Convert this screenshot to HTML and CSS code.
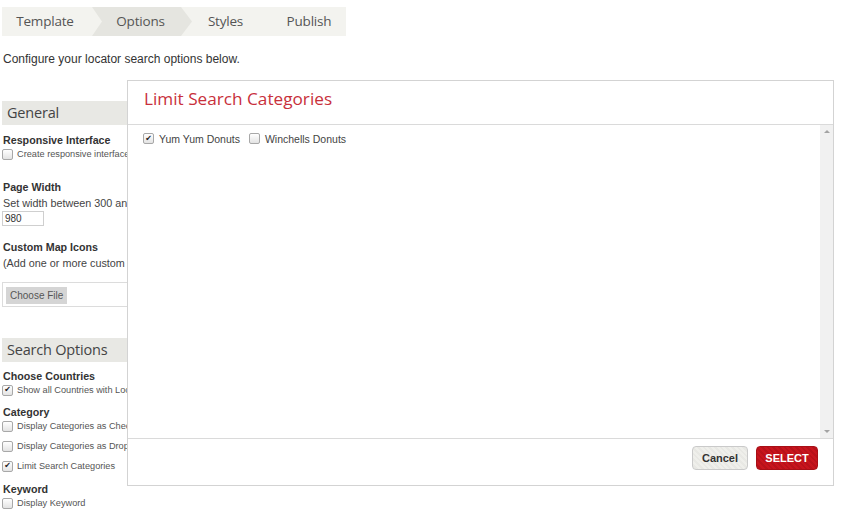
FILE: index.html
```html
<!DOCTYPE html>
<html lang="en">
<head>
    <meta charset="UTF-8">
    <meta name="viewport" content="width=device-width, initial-scale=1.0">
    <title>Locator Options</title>
    <link rel="stylesheet" href="styles.css">
</head>
<body>
    <div class="steps">
        <div class="step step-template">Template</div>
        <div class="step step-options">Options</div>
        <div class="step step-styles">Styles</div>
        <div class="step step-publish">Publish</div>
    </div>

    <p class="intro">Configure your locator search options below.</p>

    <div class="settings">
        <h2 class="section-title">General</h2>

        <div class="field field-first">
            <div class="field-label">Responsive Interface</div>
            <div class="check-row"><span class="cb"></span>Create responsive interface for mobile devices</div>
        </div>

        <div class="field field-page-width">
            <div class="field-label">Page Width</div>
            <div class="field-text">Set width between 300 and 2000 pixels</div>
            <div class="num-input">980</div>
        </div>

        <div class="field field-icons">
            <div class="field-label">Custom Map Icons</div>
            <div class="field-text">(Add one or more custom icons to your map)</div>
            <div class="file-box"><span class="file-button">Choose File</span></div>
        </div>

        <h2 class="section-title section-search">Search Options</h2>

        <div class="field field-first">
            <div class="field-label">Choose Countries</div>
            <div class="check-row"><span class="cb checked">&#10004;</span>Show all Countries with Locations</div>
        </div>

        <div class="field field-category">
            <div class="field-label">Category</div>
            <div class="check-row"><span class="cb"></span>Display Categories as Checkboxes</div>
            <div class="check-row spaced"><span class="cb"></span>Display Categories as Dropdown</div>
            <div class="check-row spaced"><span class="cb checked">&#10004;</span>Limit Search Categories</div>
        </div>

        <div class="field field-keyword">
            <div class="field-label">Keyword</div>
            <div class="check-row"><span class="cb"></span>Display Keyword</div>
        </div>
    </div>

    <!-- category picker dialog -->
    <div class="modal">
        <div class="modal-head">Limit Search Categories</div>
        <div class="modal-body">
            <div class="modal-content">
                <label class="cat-option"><span class="cb checked">&#10004;</span>Yum Yum Donuts</label>
                <label class="cat-option"><span class="cb"></span>Winchells Donuts</label>
            </div>
            <div class="scrollbar">
                <span class="arrow arrow-up"></span>
                <span class="arrow arrow-down"></span>
            </div>
        </div>
        <div class="modal-foot">
            <button class="btn btn-cancel">Cancel</button>
            <button class="btn btn-select">SELECT</button>
        </div>
    </div>
</body>
</html>
```

FILE: styles.css
```css
body {
    margin: 0;
    background: #fff;
    color: #333;
    font-family: 'Liberation Sans', Arial, sans-serif;
    overflow: hidden;
}

/* ===== Step bar ===== */
.steps {
    display: flex;
    width: 344px;
    height: 29px;
    margin: 7px 0 0 2px;
    background: #f3f3ef;
    font-family: 'Open Sans', sans-serif;
    font-size: 13.5px;
    letter-spacing: -0.2px;
    line-height: 29px;
    color: #555;
}

.step {
    box-sizing: border-box;
    text-align: center;
}

.step-template {
    width: 90px;
    padding-right: 4px;
}

.step-options {
    width: 100px;
    padding-right: 3px;
    background: #e5e5e0;
    clip-path: polygon(0 0, 89px 0, 100px 50%, 89px 100%, 0 100%, 10px 50%);
}

.step-styles {
    width: 70px;
    padding-right: 3px;
}

.step-publish {
    width: 84px;
    padding-left: 10px;
}

.intro {
    margin: 16px 0 0 3px;
    font-size: 12px;
    line-height: 14px;
    color: #333;
}

/* ===== Settings column ===== */
.settings {
    width: 420px;
    margin: 35px 0 0 2px;
}

.section-title {
    margin: 0;
    height: 24px;
    padding-left: 5px;
    background: #e8e8e4;
    font-family: 'Open Sans', sans-serif;
    font-size: 14.5px;
    font-weight: 400;
    letter-spacing: -0.2px;
    line-height: 24px;
    color: #444;
}

.section-search {
    margin-top: 31px;
}

.field-first { margin-top: 8px; }
.section-search + .field-first { margin-top: 7px; }
.field-page-width { margin-top: 19px; }
.field-icons { margin-top: 14px; }
.field-category { margin-top: 8px; }
.field-keyword { margin-top: 9px; }

.field-label {
    padding-left: 1px;
    font-size: 10.7px;
    font-weight: bold;
    line-height: 14px;
    color: #333;
}

.field-text {
    margin-top: 2px;
    padding-left: 1px;
    font-size: 10.8px;
    line-height: 14px;
    color: #444;
    white-space: nowrap;
}

.check-row {
    display: flex;
    align-items: center;
    gap: 4px;
    height: 14px;
    font-size: 9.2px;
    color: #555;
    white-space: nowrap;
}

.check-row.spaced {
    margin-top: 6px;
}

.cb {
    flex: none;
    display: inline-flex;
    align-items: center;
    justify-content: center;
    width: 9px;
    height: 9px;
    border: 1px solid #a8a8a8;
    border-radius: 2px;
    background: linear-gradient(#ffffff, #e3e3e3);
    font-size: 8px;
    line-height: 1;
    color: #222;
    font-family: 'DejaVu Sans', sans-serif;
}

.num-input {
    box-sizing: border-box;
    width: 42px;
    height: 15px;
    margin-top: 1px;
    padding: 0 2px;
    border: 1px solid #cfcfcf;
    font-size: 10px;
    line-height: 13px;
    color: #333;
}

.file-box {
    box-sizing: border-box;
    height: 25px;
    margin-top: 12px;
    padding: 2px 3px;
    border: 1px solid #dcdcdc;
}

.file-button {
    display: inline-block;
    height: 17px;
    padding: 0 4px;
    background: #d5d5d5;
    font-size: 10px;
    line-height: 17px;
    color: #555;
}

/* ===== Dialog ===== */
.modal {
    position: absolute;
    left: 127px;
    top: 80px;
    box-sizing: border-box;
    width: 707px;
    height: 406px;
    display: flex;
    flex-direction: column;
    background: #fff;
    border: 1px solid #d3d3d3;
}

.modal-head {
    flex: none;
    height: 43px;
    padding-left: 16px;
    border-bottom: 1px solid #dadada;
    font-family: 'Open Sans', sans-serif;
    font-size: 17.2px;
    line-height: 36px;
    color: #c8303b;
}

.modal-body {
    flex: 1;
    display: flex;
}

.modal-content {
    flex: 1;
    display: flex;
    align-items: flex-start;
    gap: 9px;
    padding: 7px 0 0 15px;
}

.cat-option {
    display: flex;
    align-items: center;
    gap: 5px;
    height: 13px;
    font-size: 10.5px;
    color: #444;
}

.scrollbar {
    position: relative;
    width: 13px;
    background: #f1f1f1;
}

.arrow {
    position: absolute;
    left: 4px;
    width: 0;
    height: 0;
    border-left: 3px solid transparent;
    border-right: 3px solid transparent;
}

.arrow-up {
    top: 5px;
    border-bottom: 3px solid #a3a3a3;
}

.arrow-down {
    bottom: 5px;
    border-top: 3px solid #a3a3a3;
}

.modal-foot {
    flex: none;
    box-sizing: border-box;
    height: 47px;
    display: flex;
    justify-content: flex-end;
    align-items: flex-start;
    gap: 8px;
    padding: 7px 15px 0 0;
    border-top: 1px solid #dadada;
}

.btn {
    height: 24px;
    padding: 0;
    border-radius: 4px;
    font-family: 'Liberation Sans', Arial, sans-serif;
    font-size: 11px;
    font-weight: bold;
    cursor: pointer;
}

.btn-cancel {
    width: 56px;
    border: 1px solid #cacaca;
    color: #333;
    background: repeating-linear-gradient(45deg, #efefeb 0, #efefeb 2px, #e8e8e4 2px, #e8e8e4 4px);
}

.btn-select {
    width: 62px;
    border: 1px solid #a80f16;
    color: #fff;
    background: repeating-linear-gradient(45deg, #c8141d 0, #c8141d 2px, #b8111a 2px, #b8111a 4px);
}
```
